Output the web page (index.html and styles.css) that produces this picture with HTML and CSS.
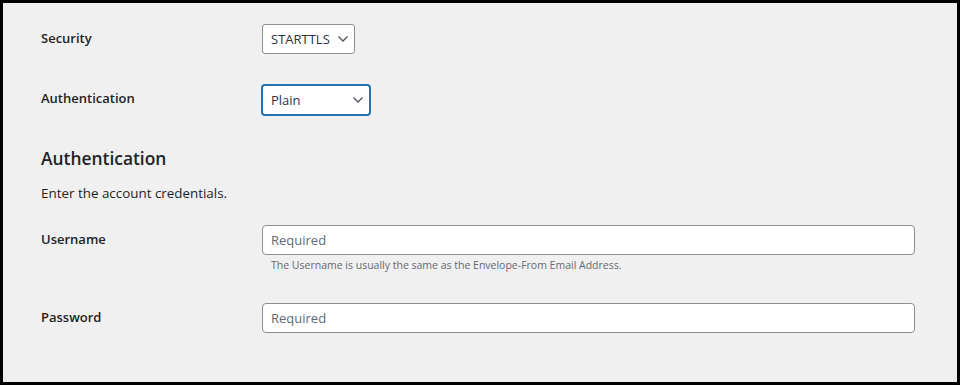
FILE: index.html
```html
<!DOCTYPE html>
<html lang="en">
<head>
    <meta charset="UTF-8">
    <meta name="viewport" content="width=device-width, initial-scale=1.0">
    <title>SMTP Settings</title>
    <link rel="stylesheet" href="styles.css">
</head>
<body>

    <div class="panel">
        <div class="form-table">
            <div class="row">
                <div class="label">Security</div>
                <div class="field">
                    <div class="select select-security">
                        <span>STARTTLS</span>
                        <svg class="chevron" width="12" height="8" viewBox="0 0 12 8"><path d="M1.5 1.5 L6 6 L10.5 1.5" fill="none" stroke="#50575e" stroke-width="1.4"/></svg>
                    </div>
                </div>
            </div>
            <div class="row">
                <div class="label">Authentication</div>
                <div class="field">
                    <div class="select select-auth focused">
                        <span>Plain</span>
                        <svg class="chevron" width="12" height="8" viewBox="0 0 12 8"><path d="M1.5 1.5 L6 6 L10.5 1.5" fill="none" stroke="#50575e" stroke-width="1.4"/></svg>
                    </div>
                </div>
            </div>
        </div>

        <h2>Authentication</h2>
        <p class="intro">Enter the account credentials.</p>

        <div class="form-table">
            <div class="row">
                <div class="label">Username</div>
                <div class="field">
                    <input type="text" class="text-input" placeholder="Required">
                    <p class="description">The Username is usually the same as the Envelope-From Email Address.</p>
                </div>
            </div>
            <div class="row">
                <div class="label">Password</div>
                <div class="field">
                    <input type="password" class="text-input" placeholder="Required">
                </div>
            </div>
        </div>
    </div>

</body>
</html>
```

FILE: styles.css
```css
        html, body {
            margin: 0;
            padding: 0;
        }
        body {
            font-family: "Open Sans", "Noto Sans", sans-serif;
            font-size: 13.4px;
            color: #1d2327;
        }
        .panel {
            box-sizing: border-box;
            width: 960px;
            height: 385px;
            border: 3px solid #000;
            background-color: #f0f0f1;
            padding: 6px 0 0 38px;
        }
        .row {
            display: flex;
        }
        .label {
            width: 201px;
            padding: 20px 10px 20px 0;
            font-size: 13px;
            font-weight: 600;
            line-height: 18.2px;
            color: #1d2327;
        }
        .field {
            padding: 15px 10px;
            line-height: 1.3;
        }
        .select {
            box-sizing: border-box;
            height: 30px;
            display: flex;
            align-items: center;
            justify-content: space-between;
            padding: 0 5px 0 8px;
            border: 1px solid #8c8f94;
            border-radius: 3px;
            background-color: #fff;
            font-size: 13px;
            color: #2c3338;
        }
        .select-security {
            width: 93px;
        }
        .select-auth {
            width: 108px;
            margin-top: 1px;
        }
        .select.focused {
            border-color: #2271b1;
            box-shadow: 0 0 0 1px #2271b1;
        }
        h2 {
            margin: 16px 0 0 0;
            font-size: 17.4px;
            font-weight: 600;
            color: #1d2327;
        }
        .intro {
            margin: 14px 0 8px 0;
        }
        .text-input {
            box-sizing: border-box;
            display: block;
            width: 653px;
            height: 30px;
            padding: 0 8px;
            border: 1px solid #8c8f94;
            border-radius: 4px;
            background-color: #fff;
            font-family: inherit;
            font-size: 13px;
            color: #2c3338;
        }
        .text-input::placeholder {
            color: #646970;
        }
        .description {
            margin: 4px 0 0 9px;
            font-size: 10.5px;
            color: #646970;
        }
```
